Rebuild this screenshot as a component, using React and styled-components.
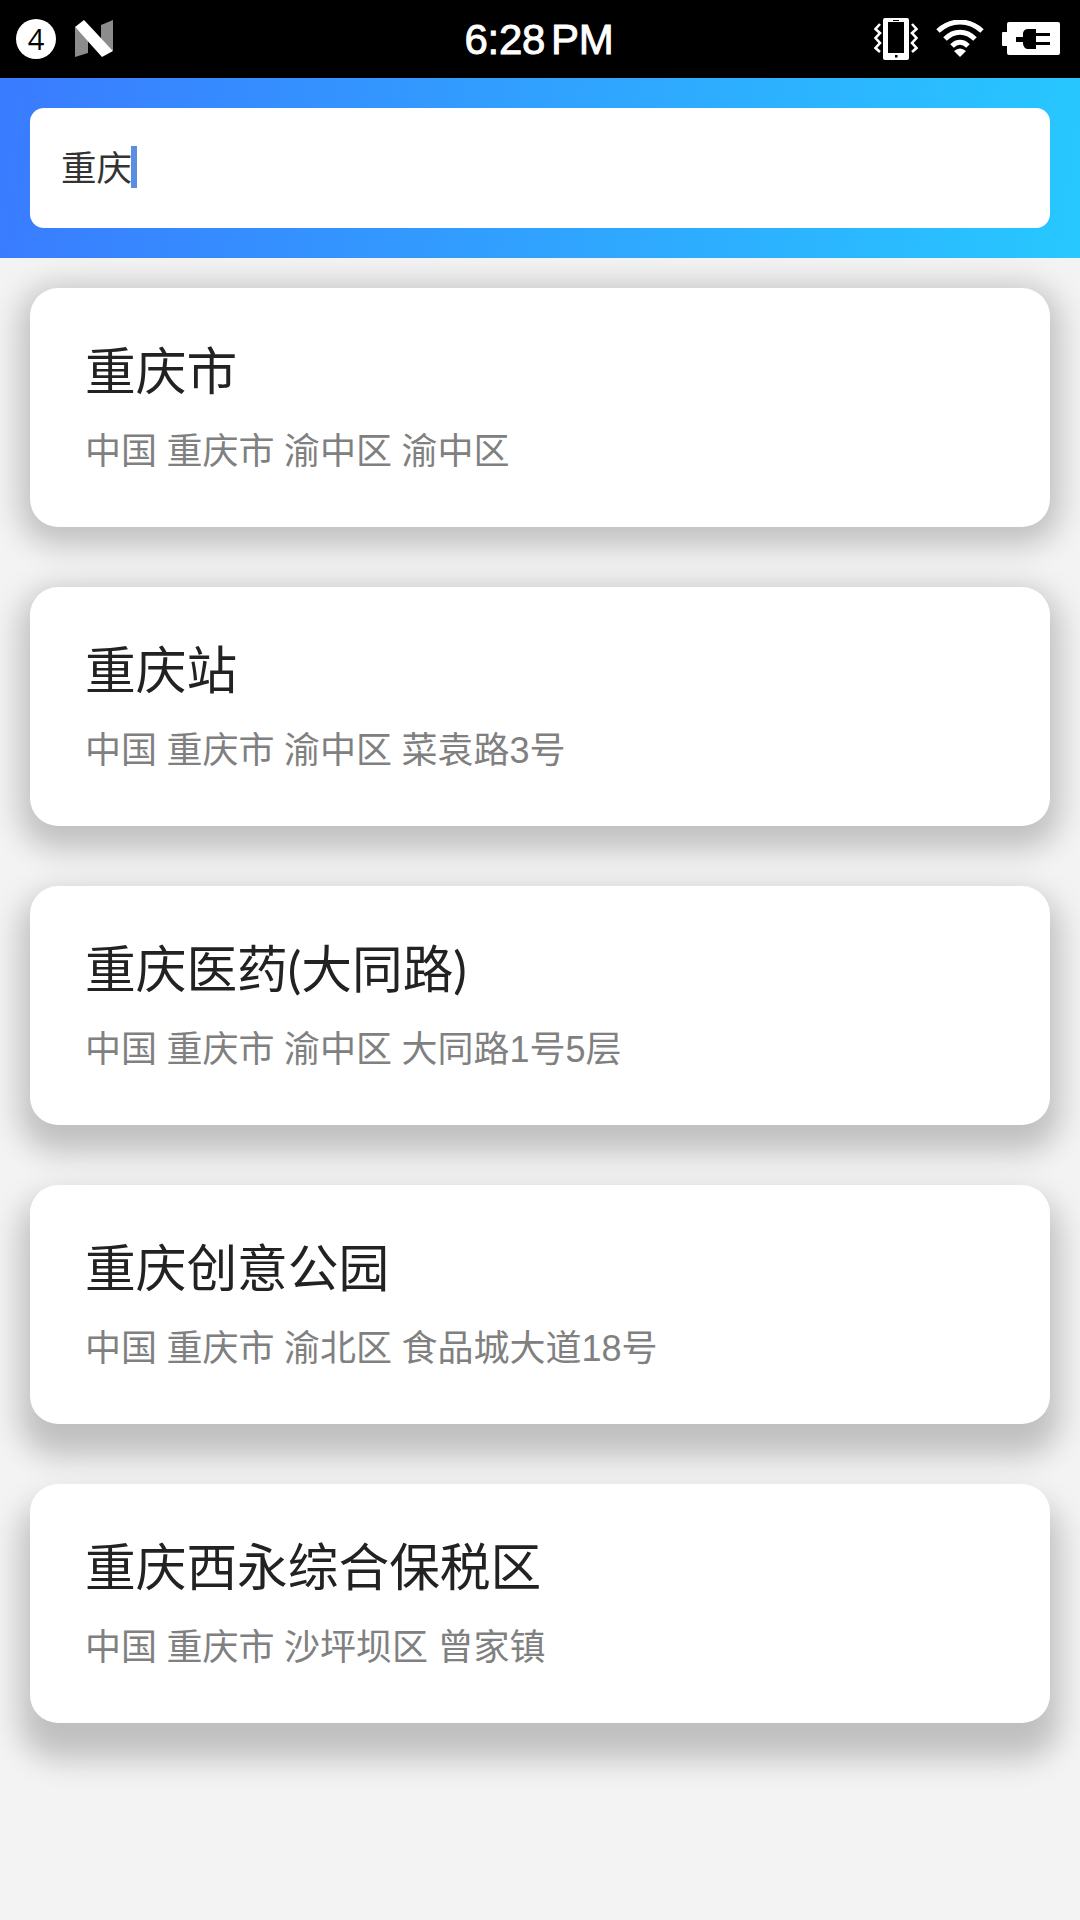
import React from "react";
import styled, { createGlobalStyle } from "styled-components";

const Global = createGlobalStyle`
  html, body { margin: 0; padding: 0; background: #f3f3f3; }
  body { font-family: "Liberation Sans", "Noto Sans CJK SC", sans-serif; }
`;
const Page = styled.div`
  width: 1080px; height: 1920px; background: #f3f3f3; overflow: hidden;
`;
const StatusBar = styled.div`
  height: 78px; background: #000; color: #fff; display: grid;
  grid-template-columns: 1fr auto 1fr; align-items: center; padding: 0 20px 0 16px; box-sizing: border-box;
`;
const StatusLeft = styled.div`display: flex; align-items: center; gap: 19px;`;
const StatusRight = styled.div`display: flex; align-items: center; justify-content: flex-end; gap: 18px;`;
const Badge = styled.div`
  width: 40px; height: 40px; border-radius: 50%; background: #fff; color: #000;
  font-size: 29px; line-height: 40px; text-align: center; font-family: "Open Sans", sans-serif;
`;
const Clock = styled.div`
  font-size: 42px; font-weight: 400; letter-spacing: -0.3px; display: flex; gap: 6px; -webkit-text-stroke: 0.9px #fff;
  transform: translate(1px, 1px);
`;
const Header = styled.div`
  height: 180px; padding: 30px; box-sizing: border-box;
  background: linear-gradient(98deg, #3a7bff 0%, #27c8ff 100%);
`;
const SearchBox = styled.div`
  height: 120px; border-radius: 14px; background: #fff; display: flex; align-items: center;
  padding-left: 31px; font-family: "Noto Sans CJK SC", sans-serif; font-size: 35.5px; color: #333;
`;
const SearchText = styled.span`margin-top: -6px;`;
const Caret = styled.span`width: 6px; height: 42px; background: #5b8de0; margin: -2px 0 0 -1px;`;
const List = styled.div`
  padding: 30px; display: flex; flex-direction: column; gap: 60px;
`;
const Card = styled.div`
  height: 239px; box-sizing: border-box; border-radius: 28px; background: #fff;
  box-shadow: 0 ${(p) => 8 + p.$depth * 4.5}px 30px 10px rgba(0,0,0,.21);
  display: flex; flex-direction: column; justify-content: center; padding: 0 0 0 55px;
  font-family: "Liberation Sans", "Noto Sans CJK SC", sans-serif;
`;
const Title = styled.div`
  font-family: "Lato", "Noto Sans CJK SC", sans-serif;
  font-size: 50.7px; line-height: 64px; color: #222; margin-top: -2px;
`;
const Sub = styled.div`font-size: 36px; line-height: 46px; color: #808080; margin-top: 26px; word-spacing: -0.5px;`;

const data = [
  ["重庆市", "中国 重庆市 渝中区 渝中区"],
  ["重庆站", "中国 重庆市 渝中区 菜袁路3号"],
  ["重庆医药(大同路)", "中国 重庆市 渝中区 大同路1号5层"],
  ["重庆创意公园", "中国 重庆市 渝北区 食品城大道18号"],
  ["重庆西永综合保税区", "中国 重庆市 沙坪坝区 曾家镇"],
];

const NLogo = () => (
  <svg width="38" height="38" viewBox="0 0 38 38">
    <path d="M0 7 L13 21 L13 33 L0 37Z" fill="#8c8c8c" />
    <path d="M26 5 L38 0 L38 31 L26 19Z" fill="#8c8c8c" />
    <path d="M0 7 L9 0 L38 31 L27 37Z" fill="#fff" />
  </svg>
);
const Phone = () => (
  <svg width="44" height="42" viewBox="0 0 44 42">
    <rect x="9" y="0" width="26" height="42" rx="2" fill="#fff" />
    <rect x="14" y="4" width="16" height="31" fill="#000" />
    <rect x="19" y="2" width="6" height="1" fill="#000" />
    <rect x="21" y="37" width="2.5" height="2.5" fill="#000" />
    <path d="M6 6 L1.5 11 L6 15 L1.5 20 L6 25 L1.5 30 L6 34" stroke="#fff" strokeWidth="2.6" fill="none" />
    <path d="M38 6 L42.5 11 L38 15 L42.5 20 L38 25 L42.5 30 L38 34" stroke="#fff" strokeWidth="2.6" fill="none" />
  </svg>
);
const Wifi = () => (
  <svg width="48" height="38" viewBox="0 0 48 38">
    <path d="M2 11 C15 -1 33 -1 46 11" stroke="#fff" strokeWidth="5" fill="none" />
    <path d="M9 19 C18 10 30 10 39 19" stroke="#fff" strokeWidth="5" fill="none" />
    <path d="M16 26 C21 21 27 21 32 26" stroke="#fff" strokeWidth="5" fill="none" />
    <path d="M18 31 Q24 26 30 31 L24 37Z" fill="#fff" />
  </svg>
);
const Battery = () => (
  <svg width="58" height="34" viewBox="0 0 58 34">
    <rect x="0" y="10" width="6" height="14" rx="1" fill="#fff" />
    <rect x="5" y="0" width="53" height="33" rx="2" fill="#fff" />
    <path d="M14 15 H21 V11 Q22 7 26 7 H34 V11 H48 V14 H34 V20 H48 V23 H34 V27 H26 Q22 27 21 22 V20 H14Z" fill="#000" />
  </svg>
);

export default function App() {
  return (
    <Page>
      <Global />
      <StatusBar>
        <StatusLeft><Badge>4</Badge><NLogo /></StatusLeft>
        <Clock><span>6:28</span><span>PM</span></Clock>
        <StatusRight><Phone /><Wifi /><Battery /></StatusRight>
      </StatusBar>
      <Header>
        <SearchBox><SearchText>重庆</SearchText><Caret /></SearchBox>
      </Header>
      <List>
        {data.map(([t, s], i) => (
          <Card key={t} $depth={i}>
            <Title>{t}</Title>
            <Sub>{s}</Sub>
          </Card>
        ))}
      </List>
    </Page>
  );
}
